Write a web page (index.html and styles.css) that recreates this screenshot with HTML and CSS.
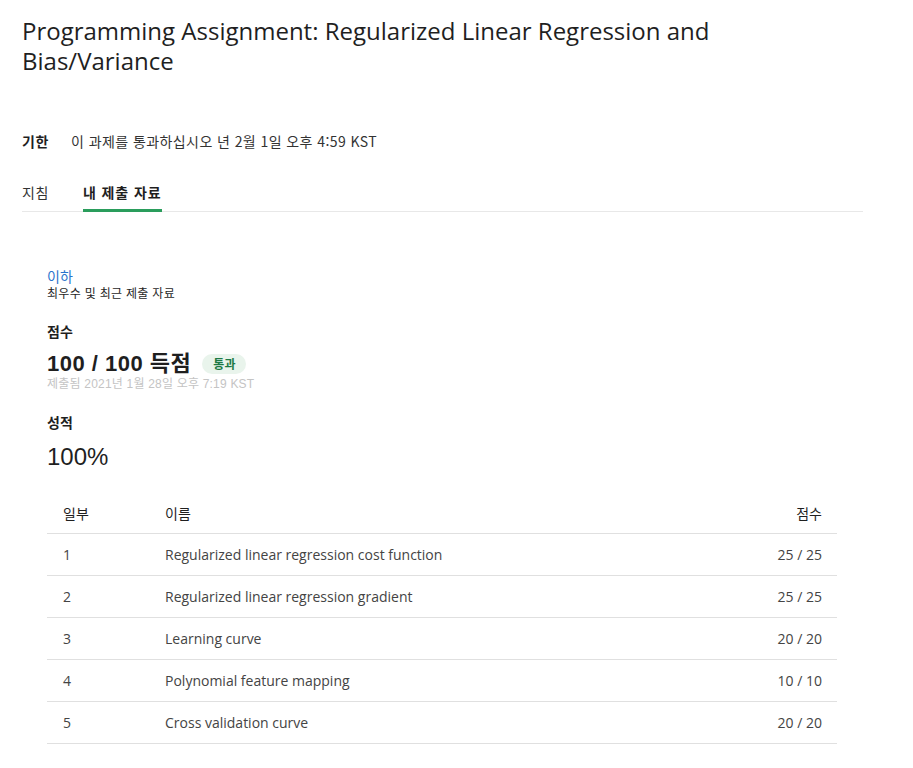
FILE: index.html
```html
<!DOCTYPE html>
<html lang="ko">
<head>
<meta charset="utf-8">
<title>Programming Assignment</title>
<link rel="stylesheet" href="styles.css">
</head>
<body>
<div class="page">
  <h1 class="title">Programming Assignment: Regularized Linear Regression and Bias/Variance</h1>
  <div class="deadline">
    <span class="deadline-label">기한</span>
    <span class="deadline-text">이 과제를 통과하십시오 년 2월 1일 오후 4:59 KST</span>
  </div>
  <nav class="tabs">
    <span class="tab">지침</span>
    <span class="tab tab-active">내 제출 자료</span>
  </nav>
  <section class="content">
    <div class="below">
      <a class="below-link">이하</a>
      <div class="below-sub">최우수 및 최근 제출 자료</div>
    </div>
    <div class="score-block">
      <div class="label">점수</div>
      <div class="score-row">
        <span class="score">100 / 100 득점</span>
        <span class="badge">통과</span>
      </div>
      <div class="submitted">제출됨 2021년 1월 28일 오후 7:19 KST</div>
    </div>
    <div class="grade-block">
      <div class="label">성적</div>
      <div class="grade">100%</div>
    </div>
    <table class="parts">
      <thead>
        <tr><th class="c-part">일부</th><th class="c-name">이름</th><th class="c-score">점수</th></tr>
      </thead>
      <tbody>
        <tr><td class="c-part">1</td><td class="c-name">Regularized linear regression cost function</td><td class="c-score">25 / 25</td></tr>
        <tr><td class="c-part">2</td><td class="c-name">Regularized linear regression gradient</td><td class="c-score">25 / 25</td></tr>
        <tr><td class="c-part">3</td><td class="c-name">Learning curve</td><td class="c-score">20 / 20</td></tr>
        <tr><td class="c-part">4</td><td class="c-name">Polynomial feature mapping</td><td class="c-score">10 / 10</td></tr>
        <tr><td class="c-part">5</td><td class="c-name">Cross validation curve</td><td class="c-score">20 / 20</td></tr>
      </tbody>
    </table>
  </section>
</div>
</body>
</html>
```

FILE: styles.css
```css
html, body {
  margin: 0;
  padding: 0;
  background: #fff;
}
body {
  font-family: "Open Sans", "Noto Sans CJK KR", sans-serif;
  color: #1f1f1f;
}
.page {
  width: 841px;
  padding: 16px 0 0 22px;
}
.title {
  margin: 0;
  font-weight: 400;
  font-size: 24px;
  line-height: 30px;
  color: #1f1f1f;
  width: 700px;
}
.deadline {
  margin-top: 55px;
  display: flex;
  align-items: center;
  font-size: 14px;
  line-height: 20px;
}
.deadline-label {
  font-family: "Noto Sans CJK KR", sans-serif;
  font-weight: 700;
  width: 49px;
  letter-spacing: 0.5px;
}
.deadline-text {
  font-family: "Noto Sans CJK KR", sans-serif;
  color: #333;
  letter-spacing: 0.42px;
}
.tabs {
  margin-top: 31px;
  display: flex;
  gap: 34px;
  border-bottom: 1px solid #e8e8e8;
  font-family: "Noto Sans CJK KR", sans-serif;
  font-size: 14px;
}
.tab {
  padding-bottom: 7px;
  line-height: 20px;
  color: #333;
  border-bottom: 3px solid transparent;
  margin-bottom: -1px;
  letter-spacing: 0.6px;
}
.tab-active {
  font-weight: 700;
  color: #1f1f1f;
  border-bottom-color: #2a9d5c;
  letter-spacing: 0.9px;
}
.content {
  padding: 55px 0 0 25px;
  font-family: "Noto Sans CJK KR", sans-serif;
}
.below-link {
  display: block;
  color: #2a73cc;
  font-size: 14px;
  line-height: 18px;
}
.below-sub {
  font-size: 12px;
  line-height: 16px;
  color: #1f1f1f;
  letter-spacing: 0.3px;
}
.score-block {
  margin-top: 20px;
}
.label {
  font-size: 14px;
  font-weight: 700;
  line-height: 20px;
}
.score-row {
  margin-top: 10px;
  display: flex;
  align-items: center;
  gap: 11px;
}
.score {
  font-family: "Liberation Sans", "Noto Sans CJK KR", sans-serif;
  font-weight: 700;
  font-size: 22px;
  line-height: 26px;
  letter-spacing: 0.5px;
}
.badge {
  background: #e9f4ec;
  color: #1d7a44;
  font-size: 12px;
  font-weight: 700;
  line-height: 20px;
  padding: 0 11px;
  border-radius: 10px;
}
.submitted {
  font-family: "Liberation Sans", "Noto Sans CJK KR", sans-serif;
  font-size: 12px;
  line-height: 14px;
  color: #c4c4c4;
  letter-spacing: 0.2px;
}
.grade-block {
  margin-top: 21px;
}
.grade {
  margin-top: 10px;
  font-family: "Liberation Sans", sans-serif;
  font-size: 24px;
  line-height: 30px;
  color: #1f1f1f;
}
.parts {
  margin-top: 20px;
  width: 790px;
  border-collapse: collapse;
  font-size: 14px;
}
.parts th {
  font-weight: 400;
  text-align: left;
  color: #1f1f1f;
  height: 41px;
  padding: 0 16px;
  border-bottom: 1px solid #e0e0e0;
}
.parts td {
  font-family: "Open Sans", "Noto Sans CJK KR", sans-serif;
  color: #444;
  height: 41px;
  padding: 0 16px;
  border-bottom: 1px solid #e0e0e0;
}
.parts .c-part {
  width: 70px;
}
.parts .c-name {
  padding-left: 16px;
}
.parts .c-score {
  text-align: right;
  padding-right: 15px;
}
```
